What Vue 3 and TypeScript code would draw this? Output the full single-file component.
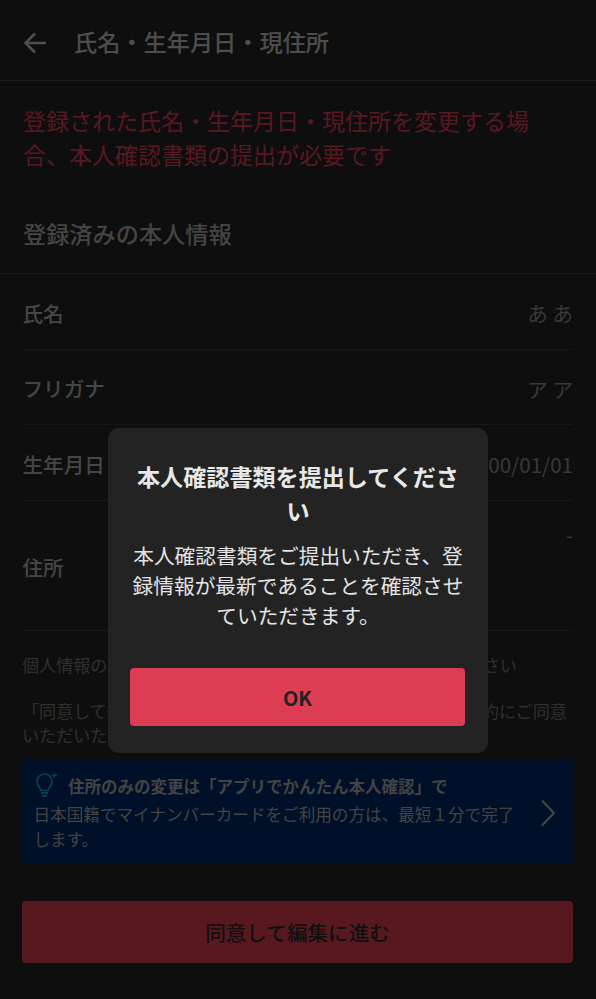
<script setup lang="ts">
interface Row { label: string; value: string; cls?: string }
const rows: Row[] = [
  { label: '氏名', value: 'あ あ', cls: 'r1' },
  { label: 'フリガナ', value: 'ア ア', cls: 'r2' },
  { label: '生年月日', value: '2000/01/01', cls: 'r3' },
  { label: '住所', value: '-', cls: 'r4' },
]
</script>

<template>
  <div class="page">
    <header class="top">
      <svg class="back" width="26" height="26" viewBox="0 0 26 26" fill="none">
        <path d="M24 13H4M13 3.500 3.500 13l9.500 9.500" stroke="currentColor" stroke-width="2.600" />
      </svg>
      <h1>氏名・生年月日・現住所</h1>
    </header>

    <p class="warn">登録された氏名・生年月日・現住所を変更する場合、本人確認書類の提出が必要です</p>
    <h2>登録済みの本人情報</h2>

    <dl class="list">
      <div v-for="r in rows" :key="r.label" class="row" :class="r.cls">
        <dt>{{ r.label }}</dt>
        <dd>{{ r.value }}</dd>
      </div>
    </dl>

    <p class="note n1">個人情報の取扱いについては、内容をご確認のうえご覧ください</p>
    <p class="note n2">「同意して編集に進む」ボタンを押すことで、上記の利用規約にご同意いただいたものとみなします。</p>

    <div class="banner">
      <div class="banner-text">
        <div class="banner-title">
          <svg class="bulb" width="25" height="26" viewBox="0 0 25 26" fill="none">
            <path d="M8 18.500c0-2.600-4-4.300-4-9a7.500 7.500 0 0 1 15 0c0 4.700-4 6.400-4 9Z" stroke="currentColor" stroke-width="1.700" />
            <path d="M8 21h7M9 24h5" stroke="currentColor" stroke-width="2" />
            <path d="M21.500 1v5M19 3.500h5" stroke="currentColor" stroke-width="1.300" />
          </svg>
          <span>住所のみの変更は「アプリでかんたん本人確認」で</span>
        </div>
        <p>日本国籍でマイナンバーカードをご利用の方は、最短１分で完了します。</p>
      </div>
      <svg class="chev" width="16" height="28" viewBox="0 0 16 28" fill="none">
        <path d="m2 1.500 12 12.500L2 26.500" stroke="currentColor" stroke-width="2" />
      </svg>
    </div>

    <button class="proceed" type="button">同意して編集に進む</button>

    <div class="overlay">
      <div class="dialog" role="dialog">
        <h3>本人確認書類を提出してください</h3>
        <p>本人確認書類をご提出いただき、登録情報が最新であることを確認させていただきます。</p>
        <button class="ok" type="button">OK</button>
      </div>
    </div>
  </div>
</template>

<style>
html, body { margin: 0; background: #232324; }
</style>

<style scoped>
.page {
  position: relative;
  width: 596px;
  height: 999px;
  overflow: hidden;
  background: #232324;
  color: #b4b4b4;
  font-family: "Noto Sans CJK JP", sans-serif;
}
.top {
  display: flex;
  align-items: center;
  height: 80px;
  padding: 0 0 0 22px;
  border-bottom: 1px solid #4a4a4a;
}
.back { color: #c4c4c4; margin-right: 26px; margin-top: 5px; }
h1, h2, h3, p, dl, dd { margin: 0; }
h1 { font-size: 23.200px; font-weight: 500; color: #c0c0c0; margin-top: 1px; }
.warn {
  margin: 22px 40px 0 23px;
  font-size: 23px;
  line-height: 34px;
  color: #dd3d52;
}
h2 {
  margin: 43px 0 0;
  padding: 0 23px 21px;
  font-size: 23.200px;
  line-height: 38px;
  font-weight: 500;
  color: #aaa;
  border-bottom: 1px solid #3d3d3d;
}
.list { padding: 0 23px; }
.row {
  display: flex;
  justify-content: space-between;
  align-items: center;
  border-bottom: 1px solid #3d3d3d;
}
.r1 { height: 75px; }
.r2 { height: 74px; }
.r3 { height: 75px; }
.r4 { height: 129px; }
dt { font-size: 20.600px; font-weight: 500; color: #b0b0b0; margin: 2px 0 0 -0.500px; }
dd { font-size: 20.600px; color: #8c8c8c; margin-top: 3px; }
.r4 dd { align-self: flex-start; margin-top: 18px; }
.note { margin: 0 23px 0 22px; font-size: 17.100px; color: #777; }
.n1 { margin-top: 21px; line-height: 25px; }
.n2 { margin-top: 22px; line-height: 24px; }
.banner {
  display: flex;
  align-items: center;
  margin: 12px 23px 0 22px;
  height: 105px;
  padding: 0 17px 0 11.500px;
  box-sizing: border-box;
  background: #002a66;
}
.banner-text { flex: 1; min-width: 0; align-self: flex-start; padding-top: 15px; }
.banner-title {
  display: flex;
  align-items: center;
  gap: 10.500px;
  font-size: 16.500px;
  font-weight: 700;
  color: #a8a8a8;
}
.bulb { color: #1e9ad6; margin: -3px 0 0 -1px; flex: none; }
.banner-text p {
  margin: 3.500px 0 0;
  width: 490px;
  font-size: 16.600px;
  line-height: 25px;
  color: #a8a8a8;
}
.chev { color: #b4b4b4; flex: none; margin-top: 2px; }
.proceed {
  display: block;
  width: 551px;
  height: 62px;
  margin: 37px 0 0 22px;
  border: 0;
  border-radius: 4px;
  background: #dd3d52;
  color: #2a2a2a;
  font: 500 20.600px "Noto Sans CJK JP", sans-serif;
}
.overlay {
  position: absolute;
  inset: 0;
  background: rgba(0, 0, 0, 0.6);
}
.dialog {
  position: absolute;
  left: 108px;
  top: 428px;
  width: 380px;
  height: 325px;
  box-sizing: border-box;
  padding: 32px 22px 0;
  border-radius: 11px;
  background: #232324;
  text-align: center;
}
.dialog h3 {
  font-size: 23.100px;
  line-height: 33.500px;
  font-weight: 700;
  color: #e8e8e8;
}
.dialog p {
  margin-top: 13px;
  font-size: 20.700px;
  line-height: 30px;
  color: #e4e4e4;
}
.ok {
  display: block;
  width: 335px;
  height: 58px;
  margin-top: 38px;
  border: 0;
  border-radius: 4px;
  background: #dd3d52;
  color: #222;
  font: 700 20px "Noto Sans CJK JP", sans-serif;
}
</style>
